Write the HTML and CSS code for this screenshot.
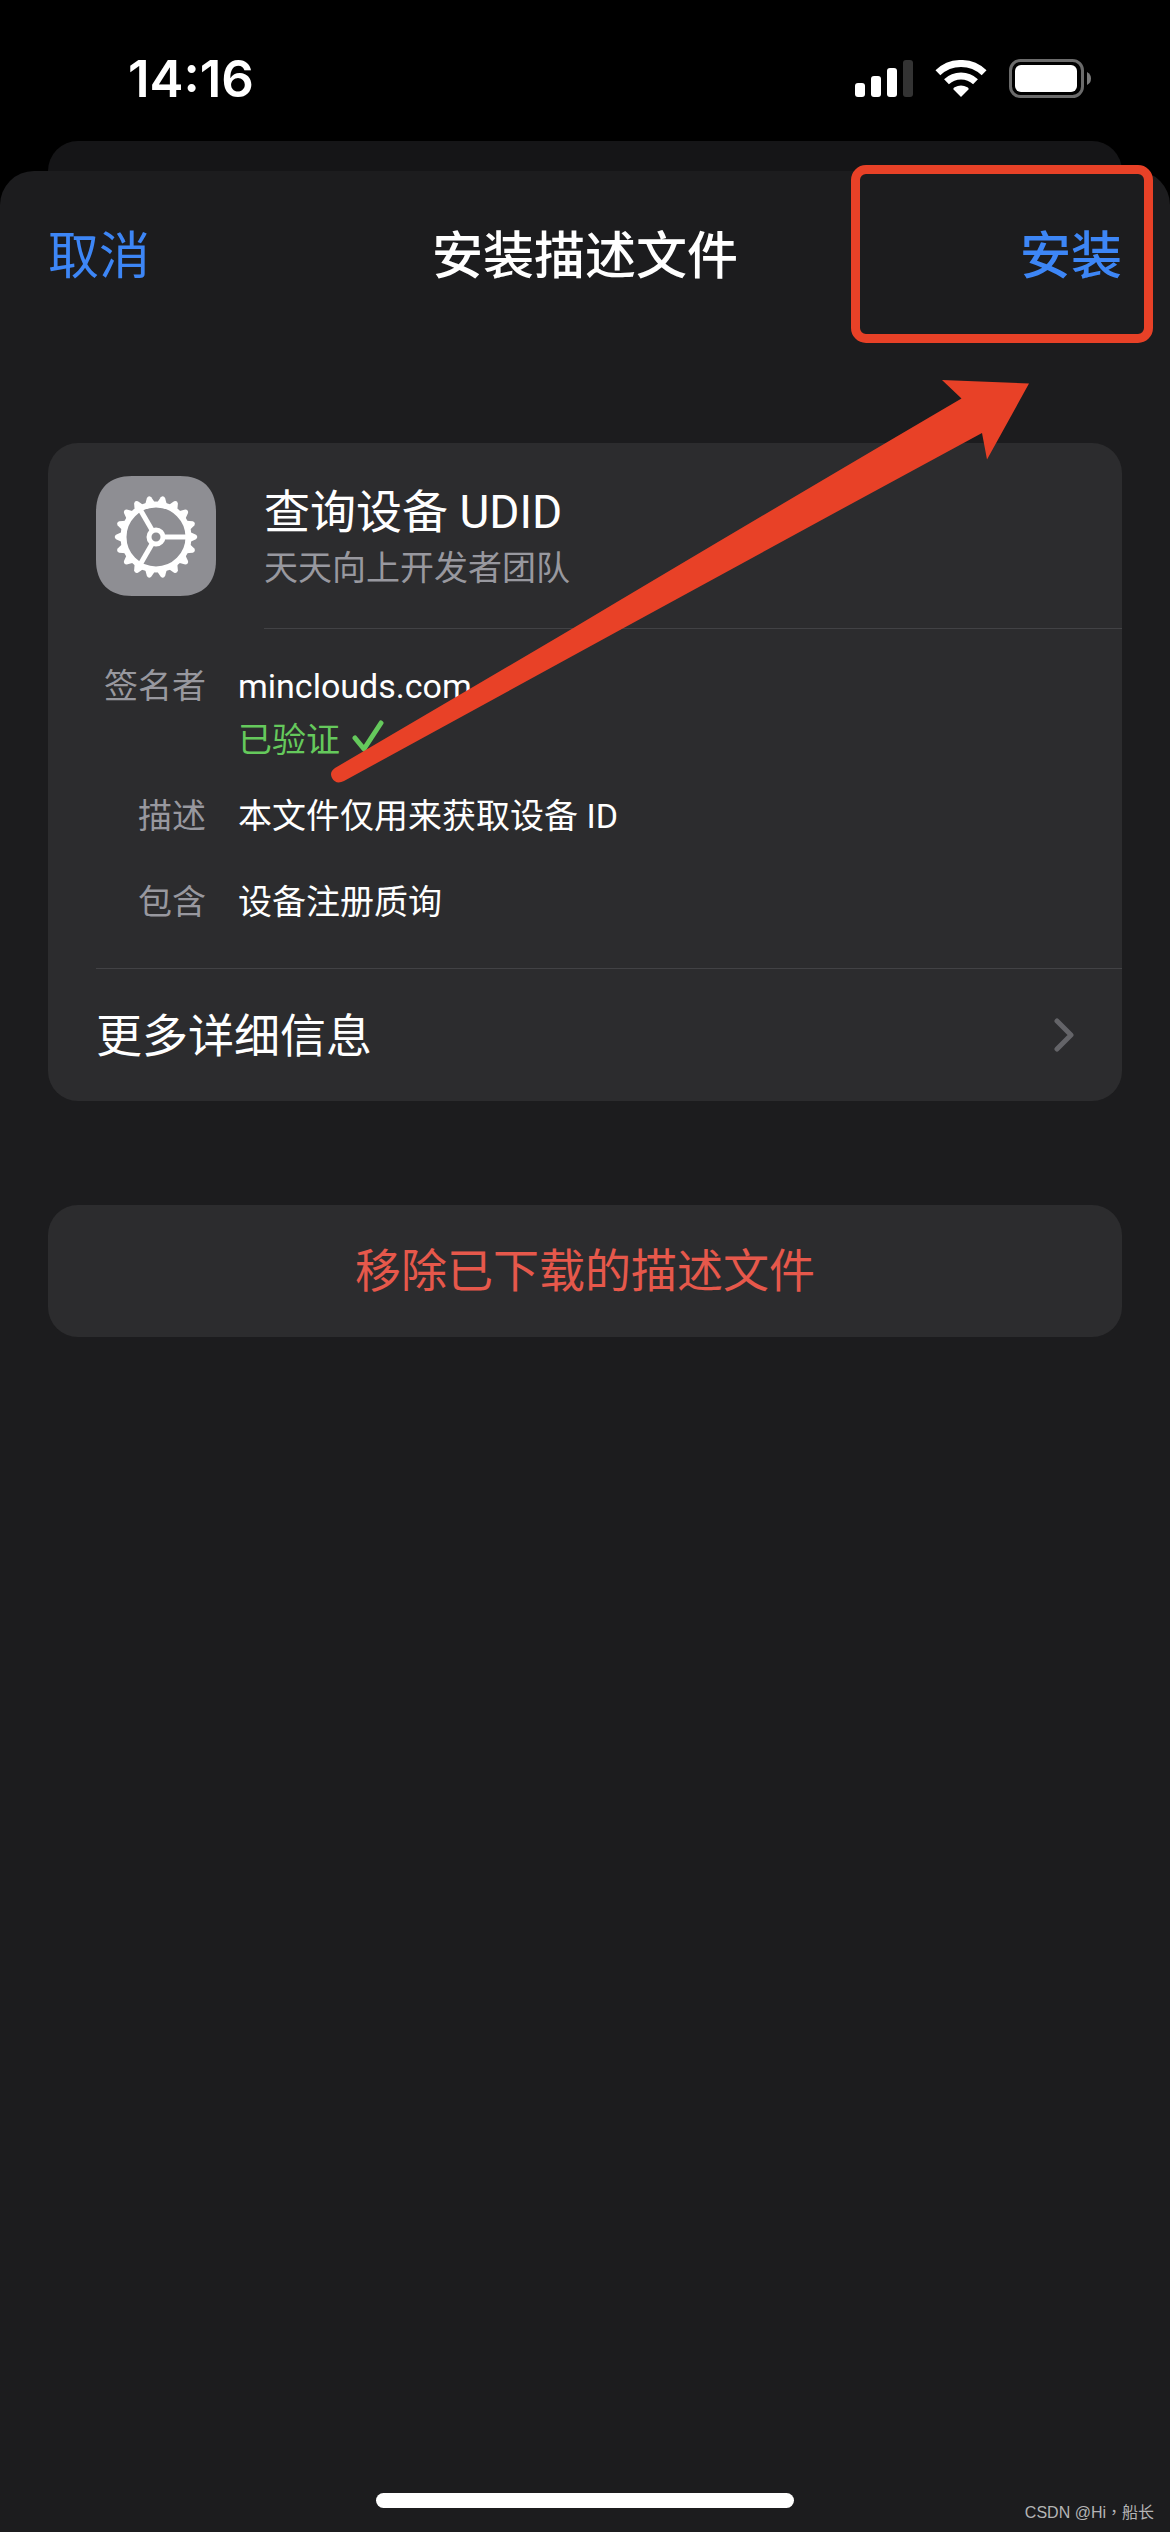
FILE: index.html
```html
<!DOCTYPE html>
<html lang="zh-CN">
<head>
<meta charset="utf-8">
<meta name="viewport" content="width=device-width, initial-scale=1">
<title>安装描述文件</title>
<link rel="stylesheet" href="styles.css">
</head>
<body>
<div class="screen">
  <div class="status-bar">
    <time class="clock">14:16</time>
    <div class="status-icons">
      <svg width="58" height="38" viewBox="0 0 58 38" fill="#fff" role="img" aria-label="信号">
        <rect x="0" y="23" width="10" height="14" rx="3"/>
        <rect x="16" y="16" width="10" height="21" rx="3"/>
        <rect x="32" y="8" width="10" height="29" rx="3"/>
        <rect x="48" y="0" width="10" height="37" rx="3" fill="#333"/>
      </svg>
      <svg width="52" height="38" viewBox="0 0 52 38" role="img" aria-label="无线网络">
        <g fill="none" stroke="#fff" stroke-width="7">
          <path d="M2.9 12.7A33.5 33.5 0 0 1 49.1 12.7"/>
          <path d="M11.5 21.8A21 21 0 0 1 40.5 21.8"/>
        </g>
        <path fill="#fff" d="M26 37L18.3 29.3Q18.3 28 19.600 27.300A12.500 12.500 0 0 1 32.400 27.300Q33.700 28 33.700 29.300Z"/>
      </svg>
      <svg width="83" height="40" viewBox="0 0 83 40" role="img" aria-label="电量">
        <rect x="1.500" y="1.500" width="72" height="36" rx="10" fill="none" stroke="#6b6b6b" stroke-width="3"/>
        <rect x="6" y="6" width="62" height="27" rx="6" fill="#fff"/>
        <path fill="#7a7a7a" d="M78 13Q82 15 82 19.500T78 26Z"/>
      </svg>
    </div>
  </div>

  <div class="sheet-behind"></div>

  <main class="sheet">
    <header class="nav">
      <button class="nav-button" type="button">取消</button>
      <h1 class="nav-title">安装描述文件</h1>
      <button class="nav-button nav-confirm" type="button">安装</button>
    </header>

    <section class="card">
      <div class="profile">
        <svg class="profile-icon" width="120" height="120" viewBox="0 0 120 120" aria-hidden="true">
          <defs>
            <path id="tooth" d="M-5 -34L-2.200 -40Q0 -42.500 2.200 -40L5 -34Z"/>
            <g id="teeth">
              <use href="#tooth"/>
              <use href="#tooth" transform="rotate(20)"/>
              <use href="#tooth" transform="rotate(40)"/>
              <use href="#tooth" transform="rotate(60)"/>
              <use href="#tooth" transform="rotate(80)"/>
              <use href="#tooth" transform="rotate(100)"/>
            </g>
          </defs>
          <path fill="#8e8e93" d="M36 0H84C107 0 120 13 120 36V84C120 107 107 120 84 120H36C13 120 0 107 0 84V36C0 13 13 0 36 0Z"/>
          <g transform="translate(60 61) rotate(90)" fill="#fff">
            <use href="#teeth"/>
            <use href="#teeth" transform="rotate(120)"/>
            <use href="#teeth" transform="rotate(240)"/>
            <g fill="none" stroke="#fff" stroke-width="5">
              <circle r="32.500" stroke-width="6"/>
              <circle r="7"/>
              <path d="M0 -8V-32"/>
              <path d="M0 -8V-32" transform="rotate(120)"/>
              <path d="M0 -8V-32" transform="rotate(240)"/>
            </g>
          </g>
        </svg>
        <div class="profile-text">
          <h2 class="profile-name">查询设备 UDID</h2>
          <p class="profile-org">天天向上开发者团队</p>
        </div>
      </div>

      <dl class="details">
        <div class="detail detail-signer">
          <dt>签名者</dt>
          <dd>minclouds.com
            <span class="verified">已验证
              <svg class="check" width="32" height="32" viewBox="0 0 32 32" fill="none" stroke="#65c95c" stroke-width="5" stroke-linecap="round" stroke-linejoin="round" aria-hidden="true"><path d="M3 18L12 29L29 3"/></svg>
            </span>
          </dd>
        </div>
        <div class="detail">
          <dt>描述</dt>
          <dd>本文件仅用来获取设备 ID</dd>
        </div>
        <div class="detail">
          <dt>包含</dt>
          <dd>设备注册质询</dd>
        </div>
      </dl>

      <a class="more" href="#details"><span class="row-label">更多详细信息</span>
        <svg width="20" height="34" viewBox="0 0 20 34" fill="none" stroke="#646468" stroke-width="5" stroke-linecap="round" stroke-linejoin="round" aria-hidden="true"><path d="M3 3L17 17L3 31"/></svg>
      </a>
    </section>

    <button class="remove" type="button"><span class="row-label">移除已下载的描述文件</span></button>

    <div class="home-indicator"></div>

    <div class="highlight"></div>
    <svg class="arrow" width="700" height="404" viewBox="0 0 700 404" aria-hidden="true">
      <path fill="#e84127" d="M699 3.500L612 0L631.500 18.500Q460 119 240 250L5 388Q-1 392 2 398Q6 405 14 401L290 250L510 130L652 53L657 79.500Z"/>
    </svg>
  </main>
  <div class="watermark" lang="zh-TW">CSDN @Hi，船长</div>
</div>
</body>
</html>
```
FILE: styles.css
```css
* {
  box-sizing: border-box;
}

body {
  margin: 0;
  background: #000;
  color: #fff;
  font-family: Roboto, "Noto Sans CJK SC", sans-serif;
}

h1, h2, p, dl, dd {
  margin: 0;
}

button {
  border: 0;
  padding: 0;
  background: none;
  font-family: inherit;
}

svg {
  display: block;
  flex: none;
}

.screen {
  position: relative;
  display: flex;
  flex-direction: column;
  min-height: 100vh;
}

/* Status bar */
.status-bar {
  display: flex;
  justify-content: space-between;
  align-items: center;
  height: 141px;
  padding: 16px 78px 0 128px;
}

.clock {
  font-family: Inter, sans-serif;
  font-size: 51px;
  font-weight: 600;
  line-height: 60px;
}

.status-icons {
  display: flex;
  align-items: center;
  gap: 22px;
}

/* Sheets */
.sheet-behind {
  height: 60px;
  margin: 0 48px -30px;
  border-radius: 30px 30px 0 0;
  background: #151517;
}

.sheet {
  position: relative;
  display: flex;
  flex: 1;
  flex-direction: column;
  padding: 0 48px 24px;
  border-radius: 34px 34px 0 0;
  background: #1c1c1e;
}

.nav {
  display: grid;
  grid-template-columns: 1fr auto 1fr;
  align-items: center;
  height: 168px;
  margin-bottom: 104px;
  padding-top: 4px;
}

.nav-button {
  justify-self: start;
  color: #3d86f6;
  font-size: 51px;
  line-height: 60px;
}

.nav-confirm {
  justify-self: end;
  font-weight: 500;
}

.nav-title {
  font-size: 51px;
  font-weight: 500;
  line-height: 60px;
}

/* Profile card */
.card,
.remove {
  border-radius: 30px;
  background: #2c2c2e;
}

.profile {
  display: flex;
  gap: 48px;
  padding-left: 48px;
}

.profile-icon {
  margin: 33px 0;
}

.profile-text {
  display: flex;
  flex: 1;
  flex-direction: column;
  justify-content: center;
  padding-top: 2px;
  border-bottom: 1px solid #424245;
}

.profile-name {
  font-size: 46px;
  font-weight: 400;
  line-height: 62px;
}

.profile-org {
  color: #98989f;
  font-size: 34px;
  line-height: 50px;
}

.details {
  display: flex;
  flex-direction: column;
  gap: 32px;
  margin-left: 48px;
  padding: 30px 0 39px;
  border-bottom: 1px solid #424245;
  font-size: 34px;
  line-height: 54px;
}

.detail {
  display: grid;
  grid-template-columns: 110px 1fr;
  gap: 32px;
}

.detail-signer {
  margin-bottom: -10px;
}

.detail dt {
  color: #98989f;
  text-align: right;
  white-space: nowrap;
}

.verified {
  display: flex;
  align-items: center;
  gap: 12px;
  color: #65c95c;
}

.check {
  margin-bottom: 8px;
}

.more {
  display: flex;
  align-items: center;
  justify-content: space-between;
  height: 132px;
  padding: 0 48px;
  color: inherit;
  font-size: 46px;
  text-decoration: none;
}

.row-label {
  padding-top: 2px;
  line-height: 60px;
}

.remove {
  height: 132px;
  margin: 104px 0;
  color: #e6584b;
  font-size: 46px;
}

.home-indicator {
  width: 418px;
  height: 15px;
  margin: auto auto 0;
  border-radius: 8px;
  background: #fff;
}

/* Annotations over the sheet */
.highlight {
  position: absolute;
  top: -6px;
  right: 17px;
  width: 302px;
  height: 178px;
  border: 9px solid #e84127;
  border-radius: 15px;
  pointer-events: none;
}

.arrow {
  position: absolute;
  top: 209px;
  right: 140px;
  pointer-events: none;
}

.watermark {
  position: absolute;
  right: 16px;
  bottom: 7px;
  color: #b4b4b5;
  font-family: "Liberation Sans", "Noto Sans CJK TC", sans-serif;
  font-size: 16px;
  line-height: 24px;
}
```
